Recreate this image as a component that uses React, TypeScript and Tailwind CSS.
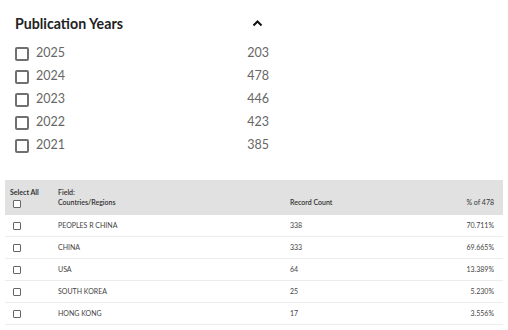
import React from "react";

const years = [
  ["2025", "203"],
  ["2024", "478"],
  ["2023", "446"],
  ["2022", "423"],
  ["2021", "385"],
];

const rows = [
  ["PEOPLES R CHINA", "338", "70.711%"],
  ["CHINA", "333", "69.665%"],
  ["USA", "64", "13.389%"],
  ["SOUTH KOREA", "25", "5.230%"],
  ["HONG KONG", "17", "3.556%"],
];

function SmallBox() {
  return <div className="w-[8px] h-[8px] border border-[#666] rounded-[1px] bg-white" />;
}

export default function App() {
  return (
    <div
      className="w-[508px] h-[330px] bg-white overflow-hidden"
      style={{ fontFamily: "Lato, 'Noto Sans', sans-serif" }}
    >
      <div className="pl-[15px] w-[269px]">
        <div className="h-[42px] flex items-center justify-between pt-[5px]">
          <span className="text-[14.2px] font-bold text-[#222]">Publication Years</span>
          <svg width="11" height="7" viewBox="0 0 11 7" className="mr-[6px] mb-[1px]">
            <path d="M1.5 5.5 L5.5 1.5 L9.5 5.5" fill="none" stroke="#111" strokeWidth="2" />
          </svg>
        </div>
        {years.map(([y, c]) => (
          <div key={y} className="h-[23px] flex items-center justify-between">
            <div className="flex items-center">
              <div className="w-[14px] h-[14px] border-2 border-[#707070] rounded-[2px]" />
              <span className="ml-[7px] text-[12.5px] text-[#666]">{y}</span>
            </div>
            <span className="text-[12.5px] text-[#666]">{c}</span>
          </div>
        ))}
      </div>

      <div className="mx-[5px] mt-[23px]">
        <div className="h-[35px] bg-[#e1e1e1] grid grid-cols-[53px_232px_1fr_auto] text-[7px] leading-[10px] text-[#333]">
          <div className="pl-[5px] pt-[7px] font-bold">
            <div>Select All</div>
            <div className="pl-[3px] pt-[3px]"><SmallBox /></div>
          </div>
          <div className="pt-[7px] font-semibold">
            <div>Field:</div>
            <div>Countries/Regions</div>
          </div>
          <div className="pt-[17px] font-semibold">Record Count</div>
          <div className="pt-[17px] pr-[9px]">% of 478</div>
        </div>
        {rows.map(([n, c, p]) => (
          <div
            key={n}
            className="h-[22px] border-b border-[#ececec] grid grid-cols-[53px_232px_1fr_auto] items-center text-[7px] text-[#444]"
          >
            <div className="pl-[8px]"><SmallBox /></div>
            <div>{n}</div>
            <div>{c}</div>
            <div className="pr-[9px]">{p}</div>
          </div>
        ))}
      </div>
    </div>
  );
}
